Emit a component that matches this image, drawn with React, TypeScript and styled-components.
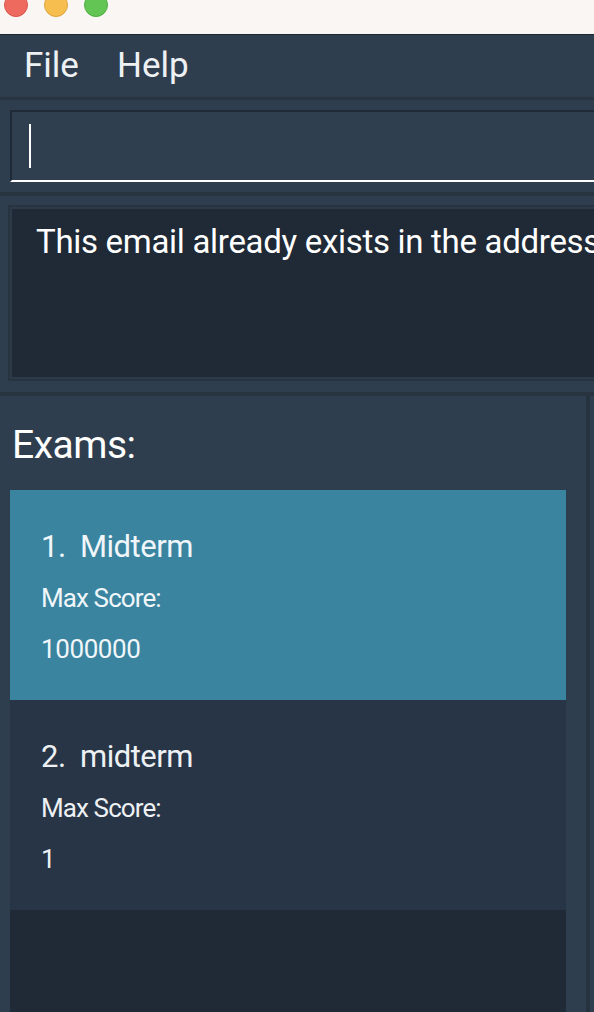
import React from "react";
import styled, { createGlobalStyle } from "styled-components";

const GlobalStyle = createGlobalStyle`
  html, body { margin: 0; padding: 0; background: #2f3e4e; }
  * { box-sizing: border-box; }
`;

const Window = styled.div`
  width: 594px;
  height: 1012px;
  overflow: hidden;
  display: flex;
  flex-direction: column;
  background: #2f3e4e;
  font-family: Roboto, "Liberation Sans", sans-serif;
  color: #ffffff;
`;

const TitleBar = styled.div`
  flex: none;
  height: 42px;
  margin-top: -7px;
  background: #faf6f4;
  border-bottom: 1px solid #1e2833;
  display: flex;
  align-items: flex-start;
  gap: 16px;
  padding-left: 4px;
`;

const Light = styled.span<{ $c: string; $b: string }>`
  width: 24px;
  height: 24px;
  border-radius: 50%;
  background: ${(p) => p.$c};
  border: 1px solid ${(p) => p.$b};
`;

const MenuBar = styled.div`
  flex: none;
  height: 65px;
  display: flex;
  align-items: center;
  padding-left: 24px;
  gap: 38px;
  border-bottom: 3px solid #283440;
`;

const MenuItem = styled.span`
  font-size: 35px;
  color: #eef1f4;
  line-height: 1;
  padding-bottom: 2px;
`;

const CommandArea = styled.div`
  flex: none;
  height: 96px;
  padding: 10px 0 0 10px;
  border-bottom: 4px solid #283440;
`;

const CommandInput = styled.div`
  height: 72px;
  border-left: 2px solid #1f2a36;
  border-top: 2px solid #1f2a36;
  border-bottom: 2px solid #ffffff;
  background: #2f3f4f;
  margin-right: -10px;
  padding: 12px 0 0 17px;
`;

const Caret = styled.span`
  display: block;
  width: 2px;
  height: 44px;
  background: #ffffff;
`;

const ResultArea = styled.div`
  flex: none;
  height: 200px;
  padding: 9px 0 0 8px;
  border-bottom: 4px solid #283440;
`;

const ResultBox = styled.div`
  height: 176px;
  margin-right: -10px;
  border: 2px solid #27333f;
  background: #1f2a36;
  box-shadow: inset 0 0 0 2px #2c3a49;
  padding: 15px 0 0 26px;
  font-size: 33px;
  letter-spacing: -0.3px;
  color: #ffffff;
  white-space: nowrap;
  overflow: hidden;
`;

const Lower = styled.div`
  flex: 1;
  display: flex;
  min-height: 0;
`;

const ExamsPanel = styled.div`
  width: 590px;
  display: flex;
  flex-direction: column;
  padding: 0 20px 0 10px;
  border-right: 4px solid #27323f;
`;

const PanelTitle = styled.h2`
  margin: 0;
  font-weight: 400;
  font-size: 39px;
  letter-spacing: -0.5px;
  color: #ffffff;
  padding: 26px 0 0 2px;
  height: 94px;
`;

const List = styled.div`
  flex: 1;
  background: #1f2a36;
  display: flex;
  flex-direction: column;
`;

const Card = styled.div<{ $selected: boolean }>`
  height: 210px;
  flex: none;
  background: ${(p) => (p.$selected ? "#3a84a0" : "#283546")};
  padding: 41px 0 0 31px;
  color: ${(p) => (p.$selected ? "#f0f6f9" : "#eef1f4")};
`;

const CardTitle = styled.div`
  font-size: 31px;
  letter-spacing: -0.5px;
  line-height: 1;
  white-space: pre;
`;

const CardLabel = styled.div`
  font-size: 26px;
  letter-spacing: -0.9px;
  line-height: 1;
  margin-top: 23px;
`;

const CardValue = styled.div`
  font-size: 26px;
  letter-spacing: -0.4px;
  line-height: 1;
  margin-top: 25px;
`;

const SidePanel = styled.div`
  flex: 1;
  background: #2f3e4e;
`;

const exams = [
  { name: "Midterm", max: "1000000" },
  { name: "midterm", max: "1" },
];

export default function App() {
  return (
    <>
      <GlobalStyle />
      <Window>
        <TitleBar>
          <Light $c="#ee6a5f" $b="#d9564c" />
          <Light $c="#f5be4f" $b="#dea63c" />
          <Light $c="#62c554" $b="#50ad43" />
        </TitleBar>
        <MenuBar>
          <MenuItem>File</MenuItem>
          <MenuItem>Help</MenuItem>
        </MenuBar>
        <CommandArea>
          <CommandInput>
            <Caret />
          </CommandInput>
        </CommandArea>
        <ResultArea>
          <ResultBox>This email already exists in the address book</ResultBox>
        </ResultArea>
        <Lower>
          <ExamsPanel>
            <PanelTitle>Exams:</PanelTitle>
            <List>
              {exams.map((e, i) => (
                <Card key={i} $selected={i === 0}>
                  <CardTitle>{`${i + 1}.  ${e.name}`}</CardTitle>
                  <CardLabel>Max Score:</CardLabel>
                  <CardValue>{e.max}</CardValue>
                </Card>
              ))}
            </List>
          </ExamsPanel>
          <SidePanel />
        </Lower>
      </Window>
    </>
  );
}
